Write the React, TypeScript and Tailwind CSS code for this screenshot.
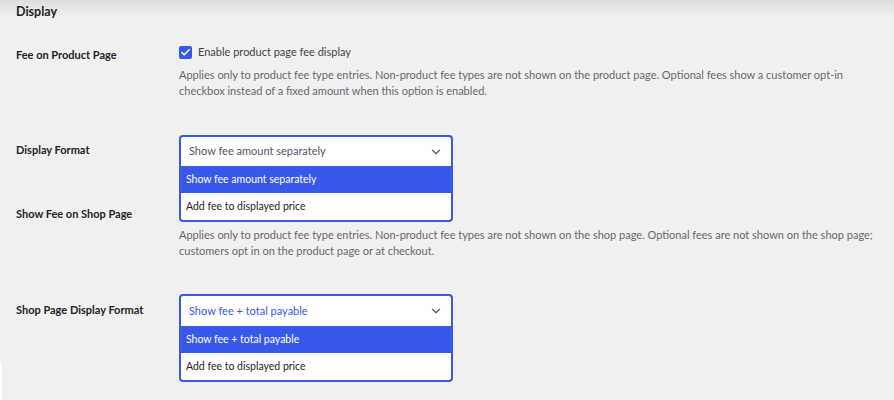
import { Check, ChevronDown } from "lucide-react";

const FONT = { fontFamily: 'Lato, "Noto Sans", Arial, sans-serif' };

function Label({ children }: { children: React.ReactNode }) {
  return (
    <div className="w-[163px] shrink-0 pt-[5px] text-[11px] leading-[20px] font-bold text-[#1d2327]">
      {children}
    </div>
  );
}

function Desc({ lines, mt }: { lines: string[]; mt: string }) {
  return (
    <div className={`${mt} text-[11px] leading-[16px] text-[#646970] whitespace-nowrap`}>
      {lines.map((l) => (
        <div key={l}>{l}</div>
      ))}
    </div>
  );
}

function OpenSelect({
  value,
  options,
  valueBlue,
  closedH,
}: {
  value: string;
  options: string[];
  valueBlue?: boolean;
  closedH: string;
}) {
  return (
    <div className="relative w-[274px]">
      <div
        className={`flex items-center justify-between ${closedH} bg-white border-2 border-b-0 border-[#3858e9] rounded-t-[4px] pl-[8px] pr-[8px] text-[11px] ${
          valueBlue ? "text-[#3858e9]" : "text-[#50575e]"
        }`}
      >
        <span>{value}</span>
        <ChevronDown size={14} strokeWidth={2} className="text-[#50575e]" />
      </div>
      <div className="absolute left-0 right-0 top-full z-10 bg-white border-2 border-t-0 border-[#3858e9] rounded-b-[4px] text-[10.5px]">
        {options.map((o, i) => (
          <div
            key={o}
            className={`h-[27px] flex items-center px-[5px] ${
              i === 0 ? "bg-[#3858e9] text-white" : "text-[#1d2327]"
            }`}
          >
            {o}
          </div>
        ))}
      </div>
    </div>
  );
}

export default function App() {
  return (
    <div
      className="relative w-[894px] h-[400px] overflow-hidden bg-[#f0f0f1] bg-gradient-to-b from-[#dedede] via-[#f0f0f1] via-[18px] to-[#f0f0f1]"
      style={FONT}
    >
      <div className="pl-[16px] pt-[2px]">
        <h2 className="text-[12.5px] leading-[20px] font-bold text-[#1d2327]">Display</h2>

        {/* Fee on product page */}
        <div className="flex mt-[20px]">
          <div className="w-[163px] shrink-0 pt-[3px] text-[11px] leading-[20px] font-bold text-[#1d2327]">
            Fee on Product Page
          </div>
          <div>
            <label className="flex items-center gap-[6px] h-[20px] text-[11px] text-[#3c434a]">
              <span className="w-[13px] h-[13px] rounded-[2px] bg-[#3858e9] flex items-center justify-center">
                <Check size={11} strokeWidth={3.5} className="text-white" />
              </span>
              Enable product page fee display
            </label>
            <Desc
              mt="mt-[5px]"
              lines={[
                "Applies only to product fee type entries. Non-product fee types are not shown on the product page. Optional fees show a customer opt-in",
                "checkbox instead of a fixed amount when this option is enabled.",
              ]}
            />
          </div>
        </div>

        {/* Display format */}
        <div className="relative z-10 flex mt-[36px]">
          <Label>Display Format</Label>
          <OpenSelect
            closedH="h-[31px]"
            value="Show fee amount separately"
            options={["Show fee amount separately", "Add fee to displayed price"]}
          />
        </div>

        {/* Show fee on shop page — its checkbox sits under the open list */}
        <div className="flex mt-[33px]">
          <Label>Show Fee on Shop Page</Label>
          <div>
            <div className="h-[20px] flex items-center">
              <span className="w-[13px] h-[13px] rounded-[2px] bg-[#3858e9]" />
            </div>
            <Desc
              mt="mt-[8px]"
              lines={[
                "Applies only to product fee type entries. Non-product fee types are not shown on the shop page. Optional fees are not shown on the shop page;",
                "customers opt in on the product page or at checkout.",
              ]}
            />
          </div>
        </div>

        {/* Shop page display format */}
        <div className="flex mt-[35px]">
          <div className="w-[163px] shrink-0 pt-[6px] text-[11px] leading-[20px] font-bold text-[#1d2327]">
            Shop Page Display Format
          </div>
          <OpenSelect
            closedH="h-[32px]"
            valueBlue
            value="Show fee + total payable"
            options={["Show fee + total payable", "Add fee to displayed price"]}
          />
        </div>
      </div>
      <div className="absolute left-0 bottom-0 w-[2px] h-[37px] bg-white" />
    </div>
  );
}
